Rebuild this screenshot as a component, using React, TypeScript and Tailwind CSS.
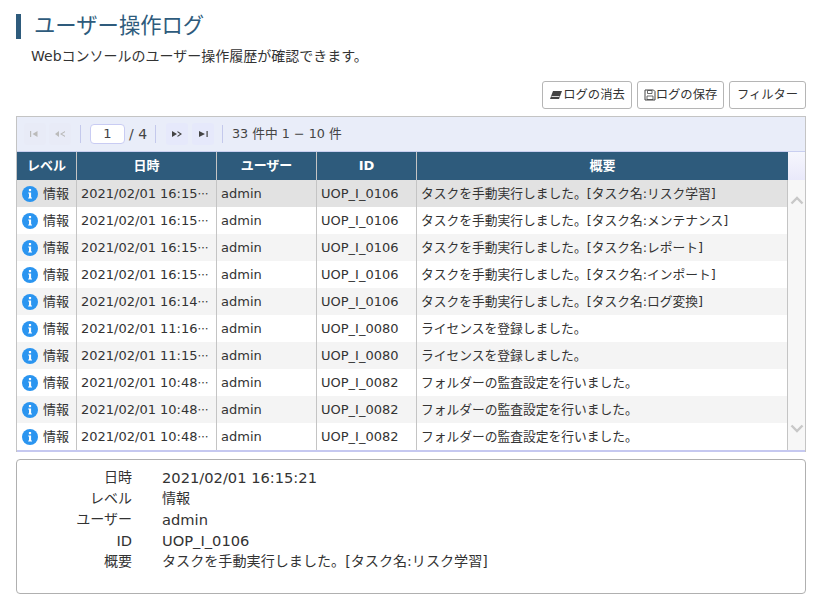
import React from "react";

const FONT = "font-['DejaVu_Sans','Noto_Sans_CJK_JP',sans-serif]";

const rows: [string, string, string][] = [
  ["2021/02/01 16:15", "UOP_I_0106", "タスクを手動実行しました。[タスク名:リスク学習]"],
  ["2021/02/01 16:15", "UOP_I_0106", "タスクを手動実行しました。[タスク名:メンテナンス]"],
  ["2021/02/01 16:15", "UOP_I_0106", "タスクを手動実行しました。[タスク名:レポート]"],
  ["2021/02/01 16:15", "UOP_I_0106", "タスクを手動実行しました。[タスク名:インポート]"],
  ["2021/02/01 16:14", "UOP_I_0106", "タスクを手動実行しました。[タスク名:ログ変換]"],
  ["2021/02/01 11:16", "UOP_I_0080", "ライセンスを登録しました。"],
  ["2021/02/01 11:15", "UOP_I_0080", "ライセンスを登録しました。"],
  ["2021/02/01 10:48", "UOP_I_0082", "フォルダーの監査設定を行いました。"],
  ["2021/02/01 10:48", "UOP_I_0082", "フォルダーの監査設定を行いました。"],
  ["2021/02/01 10:48", "UOP_I_0082", "フォルダーの監査設定を行いました。"],
];

function InfoIcon() {
  return (
    <svg width="16" height="16" viewBox="0 0 16 16" className="shrink-0">
      <circle cx="8" cy="8" r="8" fill="#2b95f0" />
      <rect x="6.900" y="3" width="2.200" height="2.200" fill="#fff" />
      <path d="M6.200 6.600H9.100V11.600H10V12.600H6.200V11.600H7V7.600H6.200Z" fill="#fff" />
    </svg>
  );
}

function Pager({ kind, active }: { kind: "first" | "prev" | "next" | "last"; active: boolean }) {
  const color = active ? "#444" : "#bbb";
  return (
    <span className={`w-[22px] h-[22px] flex items-center justify-center rounded-[3px] ${active ? "bg-[#e6e9fb]" : "bg-[#e8ebf7]"}`}>
      <svg width="12" height="8" viewBox="0 0 12 8">
        {kind === "first" && <path d="M1 1h1.200v6H1ZM3.500 4l5-3v6Z" fill={color} />}
        {kind === "prev" && <path d="M1 4l4-3v6ZM6 4l5-3v1.200L8 4l3 1.800V7Z" fill={color} />}
        {kind === "next" && <path d="M1 1l5 3-5 3ZM6.500 1l4.500 3-4.500 3V5.800L9 4 6.500 2.200Z" fill={color} />}
        {kind === "last" && <path d="M2 1l6 3-6 3ZM9.500 1h1.200v6H9.500Z" fill={color} />}
      </svg>
    </span>
  );
}

function Btn({ children, w }: { children: React.ReactNode; w: string }) {
  return (
    <button className={`h-[28px] ${w} flex items-center justify-center border border-[#b5b5b5] rounded-[3px] bg-white text-[12.300px] text-[#333]`}>
      {children}
    </button>
  );
}

function Sep() {
  return <span className="block w-px h-[18px] bg-[#c4c9ec]" />;
}

const cell = "border-r border-[#c4c4c4] flex items-center px-[4px] whitespace-nowrap overflow-hidden";
const head = "border-r border-[#c4c4c4] flex items-center justify-center font-bold text-[13px] text-white";
const cols = "grid grid-cols-[60px_140px_100px_100px_371px]";

export default function App() {
  return (
    <div className={`w-[827px] h-[610px] bg-white overflow-hidden px-4 pt-[14px] text-[#333] ${FONT}`}>
      <div className="flex items-start h-[25px] border-l-[5px] border-[#2e5b7c] pl-[13px]">
        <h1 className="text-[21.330px] leading-[23px] text-[#2e5b7c] font-normal">ユーザー操作ログ</h1>
      </div>
      <p className="mt-[8px] ml-[15px] text-[14px] leading-[19px]">Webコンソールのユーザー操作履歴が確認できます。</p>

      <div className="mt-[15px] flex justify-end gap-[5px] w-[790px]">
        <Btn w="w-[90px]">
          <svg width="14" height="10" viewBox="0 0 14 10" className="shrink-0">
            <path d="M4 1H13L10 9H1Z" fill="#444" />
            <path d="M2.500 6.500H10.500" stroke="#fff" strokeWidth="0.800" />
          </svg>
          ログの消去
        </Btn>
        <Btn w="w-[87px]">
          <svg width="12" height="12" viewBox="0 0 12 12" className="shrink-0">
            <path d="M1 1H9.500L11 2.500V11H1Z" fill="none" stroke="#444" />
            <path d="M3.500 1.500H8V4.500H3.500ZM3 7H9V10.500H3Z" fill="none" stroke="#444" strokeWidth="0.800" />
          </svg>
          ログの保存
        </Btn>
        <Btn w="w-[77px]">フィルター</Btn>
      </div>

      <div className="mt-[7px] w-[790px] border border-[#c4c4c4] border-b-0">
        <div className="h-[35px] bg-[#e9edf9] border-b border-[#c9cff0] flex items-center pl-[7px] text-[12.750px] text-[#444]">
          <span className="flex gap-[3px]">
            <Pager kind="first" active={false} />
            <Pager kind="prev" active={false} />
          </span>
          <span className="ml-[9px] mr-[9px]"><Sep /></span>
          <span className="w-[35px] h-[20px] bg-white border border-[#c9ccf3] rounded-[4px] flex items-center justify-center text-[13px]">1</span>
          <span className="ml-[4px] w-[26px] text-[14px]">/ 4</span>
          <Sep />
          <span className="ml-[10px] flex gap-[4px]">
            <Pager kind="next" active />
            <Pager kind="last" active />
          </span>
          <span className="ml-[8px] mr-[9px]"><Sep /></span>
          <span>33 件中 1 − 10 件</span>
        </div>
        <div className="flex">
          <div className="flex-1">
            <div className={`${cols} h-[28px] bg-[#2e5b7c]`}>
              <div className={head}>レベル</div>
              <div className={head}>日時</div>
              <div className={head}>ユーザー</div>
              <div className={head}>ID</div>
              <div className={`${head} border-r-0`}>概要</div>
            </div>
            {rows.map((r, i) => (
              <div
                key={i}
                className={`${cols} h-[27px] text-[13px] text-[#333] ${i === 0 ? "bg-[#e2e2e2]" : i % 2 === 1 ? "bg-white" : "bg-[#f4f4f4]"}`}
              >
                <div className={`${cell} gap-[5px] !px-[5px]`}>
                  <InfoIcon />
                  <span>情報</span>
                </div>
                <div className={cell}>
                  {r[0]}
                  <span className="text-[11px] font-['Noto_Sans_CJK_JP',sans-serif]">…</span>
                </div>
                <div className={cell}>admin</div>
                <div className={cell}>{r[1]}</div>
                <div className={`${cell} text-[12.750px]`}>{r[2]}</div>
              </div>
            ))}
          </div>
          <div className="w-[17px] bg-[#f7f7f7] flex flex-col">
            <div className="h-[28px] bg-linear-to-b from-[#f6f7fd] to-[#e9e9fa]" />
            <div className="flex-1 flex flex-col items-center justify-between pt-[16px] pb-[17px]">
              <svg width="14" height="9" viewBox="0 0 14 9">
                <path d="M1.500 7.500L7 2l5.500 5.500" fill="none" stroke="#c8c8c8" strokeWidth="2.400" />
              </svg>
              <svg width="14" height="9" viewBox="0 0 14 9">
                <path d="M1.500 1.500L7 7l5.500-5.500" fill="none" stroke="#c8c8c8" strokeWidth="2.400" />
              </svg>
            </div>
          </div>
        </div>
        <div className="h-[2px] bg-[#c5c8f0]" />
      </div>

      <div className="mt-[7px] w-[790px] h-[135px] border border-[#b0b0b0] rounded-[4px] pt-[7px] text-[14px]">
        {[
          ["日時", "2021/02/01 16:15:21", true],
          ["レベル", "情報", false],
          ["ユーザー", "admin", true],
          ["ID", "UOP_I_0106", true],
          ["概要", "タスクを手動実行しました。[タスク名:リスク学習]", false],
        ].map(([k, v, latin]) => (
          <div key={k as string} className="flex h-[21px] items-center leading-[21px]">
            <span className={`w-[115px] text-right ${k === "ID" ? "text-[14.670px]" : ""}`}>{k}</span>
            <span className={`ml-[30px] ${latin ? "text-[14.670px]" : "text-[14.100px]"}`}>{v}</span>
          </div>
        ))}
      </div>
    </div>
  );
}
